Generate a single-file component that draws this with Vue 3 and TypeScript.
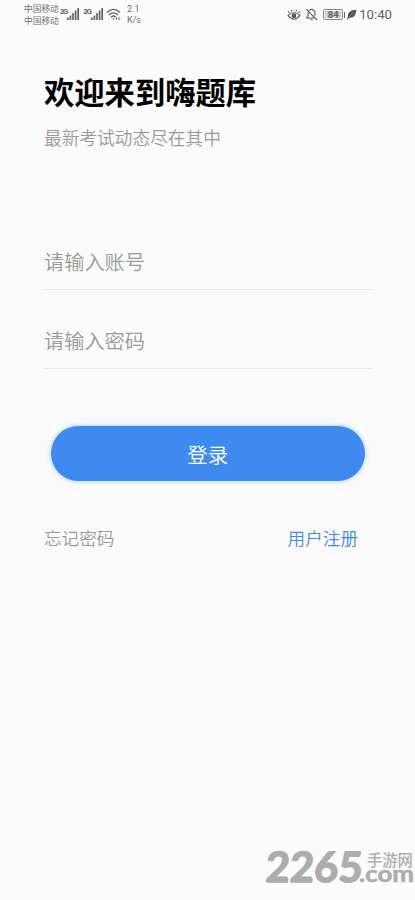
<script setup lang="ts">
import { ref } from 'vue'

const account = ref('')
const password = ref('')
const bars = [2.5, 4.5, 7, 9.5, 12]
</script>

<template>
  <main class="page">
    <header class="status">
      <div class="carriers"><span>中国移动</span><span>中国移动</span></div>
      <div v-for="n in 2" :key="n" class="signal">
        <span class="gen">2G</span>
        <svg width="14" height="12" viewBox="0 0 14 12">
          <rect v-for="(h, i) in bars" :key="h" :x="i * 2.6" :y="12 - h" width="1.6" :height="h" fill="#5c5c5c" />
        </svg>
      </div>
      <svg class="wifi" width="16" height="13" viewBox="0 0 16 13" fill="none" stroke="#626262" stroke-width="1.3">
        <path d="M1 4.4Q7.5-1.6 14 4.4M3 7Q7.5 2.7 12 7M5 9.3Q7.5 6.9 9.7 9" />
        <path d="M6.2 10.4h2.6L7.5 12z" fill="#626262" stroke="none" />
        <path d="M10.7 12V9M9.6 10.1l1.1-1.1M13 8.7v3.1m1.1-1.1L13 11.8" stroke-width=".8" />
      </svg>
      <div class="rate"><span>2.1</span><span>K/s</span></div>
      <div class="right">
        <svg width="14" height="12" viewBox="0 0 14 12" fill="none" stroke="#565656" stroke-width="1.1">
          <path d="M1 6.4Q7 1.2 13 6.4Q7 14.2 1 6.4ZM2.5 3.8 1.2 2.4M5 2.7 4.4.9M9 2.7 9.6.9M11.5 3.8l1.3-1.4" />
          <circle cx="7" cy="6.9" r="1.8" fill="#565656" />
        </svg>
        <svg class="bell" width="13" height="13" viewBox="0 0 13 13" fill="none" stroke="#606060" stroke-width="1.1">
          <path d="M1.2 1.2 12 12M3.1 3.7V8L1.7 10h8.4M4.1 2.6Q6.5.3 9 2.6L9.9 4v4M5.4 11.8h2.2" />
        </svg>
        <span class="battery">84</span><i class="tip"></i>
        <svg class="leaf" width="10" height="11" viewBox="0 0 10 11">
          <path d="M9.3.8C4 1 .8 3.3.9 7.5L0 10l.8.4 1.4-1.7C6.7 9.3 9 6.5 9.3.8Z" fill="#555" />
          <path d="M2 8 7 3" stroke="#999" stroke-width=".5" />
        </svg>
        <time>10:40</time>
      </div>
    </header>

    <h1>欢迎来到嗨题库</h1>
    <p class="subtitle">最新考试动态尽在其中</p>

    <form @submit.prevent>
      <input v-model="account" class="field" type="text" placeholder="请输入账号" />
      <input v-model="password" class="field second" type="password" placeholder="请输入密码" />
      <button type="submit">登录</button>
    </form>

    <nav class="links">
      <a class="forgot">忘记密码</a>
      <a class="register">用户注册</a>
    </nav>

    <svg class="watermark" width="155" height="60" viewBox="0 0 155 60" fill="#adadad">
      <text class="digits" transform="translate(5 42) skewX(-3)" textLength="97" lengthAdjust="spacingAndGlyphs">2265</text>
      <text class="domain" x="99" y="42" textLength="55" lengthAdjust="spacingAndGlyphs">.com</text>
      <text class="cn" x="107" y="26" textLength="46">手游网</text>
    </svg>
  </main>
</template>

<style>
body {
  margin: 0;
  background: #fbfbfb;
}
</style>

<style scoped>
.page {
  position: relative;
  box-sizing: border-box;
  width: 100%;
  height: 900px;
  overflow: hidden;
  background: #fbfbfb;
  font-family: "Noto Sans CJK SC", sans-serif;
}
.status {
  display: flex;
  height: 30px;
  padding: 0 23px 0 24px;
  color: #707070;
}
.carriers,
.rate {
  display: flex;
  flex-direction: column;
  padding-top: 3px;
  font-size: 8.7px;
  line-height: 12px;
  white-space: nowrap;
}
.carriers {
  width: 36px;
}
.signal {
  display: flex;
  width: 23.5px;
  padding-top: 8px;
}
.gen {
  width: 7px;
  font: bold 7px/7px "Liberation Sans", sans-serif;
  letter-spacing: -0.9px;
  color: #555;
}
.wifi {
  margin-top: 8px;
  margin-left: -1px;
}
.rate {
  margin-left: 5px;
  padding-top: 4px;
  font-family: Roboto, sans-serif;
  font-size: 9px;
  line-height: 10.5px;
}
.right {
  display: flex;
  align-items: center;
  height: 29px;
  margin-left: auto;
}
.bell {
  margin-left: 4px;
}
.battery {
  box-sizing: border-box;
  width: 20px;
  height: 11px;
  margin-left: 5px;
  border: 1px solid #858585;
  border-radius: 2px;
  background: #cecece;
  background-clip: content-box;
  padding: 1px;
  font: bold 9.5px/7px Roboto, sans-serif;
  text-align: center;
  color: #606060;
}
.tip {
  width: 1px;
  height: 6px;
  margin-left: 1px;
  background: #666;
}
.leaf {
  margin: 0 2px;
}
time {
  font: 13.2px/29px Roboto, sans-serif;
  color: #606060;
}
h1 {
  margin: 39px 0 0 44px;
  font-size: 30.3px;
  font-weight: 700;
  line-height: 44px;
  color: #000;
}
.subtitle {
  margin: 11px 0 0 44px;
  font-size: 17.7px;
  font-weight: 350;
  line-height: 26px;
  color: #999;
}
form {
  display: flex;
  flex-direction: column;
  margin: 84px 43px 0;
}
.field {
  box-sizing: border-box;
  width: 100%;
  height: 56px;
  padding: 0 1px;
  border: 0;
  border-bottom: 1px solid #e8e8e8;
  border-radius: 0;
  outline: 0;
  background: transparent;
  font-family: inherit;
  font-size: 20.2px;
  font-weight: 350;
  color: #333;
}
.field::placeholder {
  color: #999;
  opacity: 1;
}
.second {
  margin-top: 23px;
}
button {
  height: 55px;
  margin: 57px 7px 0 7.5px;
  padding: 0;
  border: 0;
  border-radius: 28px;
  background: #3e8aef;
  box-shadow: 0 0 5px rgba(62, 150, 245, 0.5);
  font-family: inherit;
  font-size: 20.5px;
  font-weight: 350;
  color: #fff;
}
.links {
  display: flex;
  justify-content: space-between;
  margin: 44px 57px 0 44px;
  font-size: 17.6px;
  font-weight: 350;
  line-height: 26px;
}
.forgot {
  color: #999;
}
.register {
  color: #4389dc;
}
.watermark {
  position: absolute;
  right: 0;
  bottom: 0;
}
.digits {
  font: 700 42px Lato, sans-serif;
  stroke: #adadad;
  stroke-width: 1.4px;
  stroke-linejoin: round;
}
.domain {
  font: 700 23px Lato, sans-serif;
  stroke: #adadad;
  stroke-width: 0.6px;
}
.cn {
  font: 500 15.4px "Noto Sans CJK SC", sans-serif;
}
</style>
